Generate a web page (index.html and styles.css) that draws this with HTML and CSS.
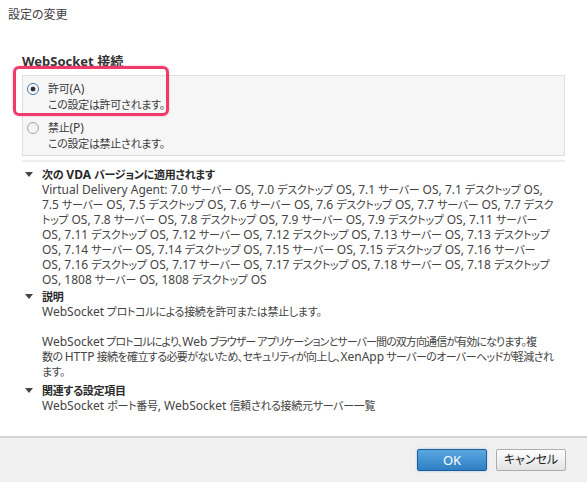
FILE: index.html
```html
<!DOCTYPE html>
<html lang="ja">
<head>
<meta charset="utf-8">
<title>設定の変更</title>
<link rel="stylesheet" href="styles.css">
</head>
<body>
<div class="dialog">
  <main class="main">
    <div class="title">設定の変更</div>
    <div class="content">
      <div class="group-title">WebSocket 接続</div>
      <div class="options-wrap">
        <div class="options">
          <div class="option">
            <span class="radio checked"></span>
            <div class="option-text">
              <div class="option-label"><span class="j">許可</span>(A)</div>
              <div class="option-desc jp">この設定は許可されます。</div>
            </div>
          </div>
          <div class="option">
            <span class="radio"></span>
            <div class="option-text">
              <div class="option-label"><span class="j">禁止</span>(P)</div>
              <div class="option-desc jp">この設定は禁止されます。</div>
            </div>
          </div>
        </div>
        <div class="highlight"></div>
      </div>
      <div class="divider"></div>

      <section class="section first">
        <span class="caret"></span>
        <div class="section-body">
          <div class="section-title"><span class="j">次の</span> VDA <span class="j">バージョンに適用されます</span></div>
          <p class="text">Virtual Delivery Agent: 7.0 <span class="j">サーバー</span> OS, 7.0 <span class="j">デスクトップ</span> OS, 7.1 <span class="j">サーバー</span> OS, 7.1 <span class="j">デスクトップ</span> OS,<br>7.5 <span class="j">サーバー</span> OS, 7.5 <span class="j">デスクトップ</span> OS, 7.6 <span class="j">サーバー</span> OS, 7.6 <span class="j">デスクトップ</span> OS, 7.7 <span class="j">サーバー</span> OS, 7.7 <span class="j">デスク</span><br><span class="j">トップ</span> OS, 7.8 <span class="j">サーバー</span> OS, 7.8 <span class="j">デスクトップ</span> OS, 7.9 <span class="j">サーバー</span> OS, 7.9 <span class="j">デスクトップ</span> OS, 7.11 <span class="j">サーバー</span><br>OS, 7.11 <span class="j">デスクトップ</span> OS, 7.12 <span class="j">サーバー</span> OS, 7.12 <span class="j">デスクトップ</span> OS, 7.13 <span class="j">サーバー</span> OS, 7.13 <span class="j">デスクトップ</span><br>OS, 7.14 <span class="j">サーバー</span> OS, 7.14 <span class="j">デスクトップ</span> OS, 7.15 <span class="j">サーバー</span> OS, 7.15 <span class="j">デスクトップ</span> OS, 7.16 <span class="j">サーバー</span><br>OS, 7.16 <span class="j">デスクトップ</span> OS, 7.17 <span class="j">サーバー</span> OS, 7.17 <span class="j">デスクトップ</span> OS, 7.18 <span class="j">サーバー</span> OS, 7.18 <span class="j">デスクトップ</span><br>OS, 1808 <span class="j">サーバー</span> OS, 1808 <span class="j">デスクトップ</span> OS</p>
        </div>
      </section>

      <section class="section second">
        <span class="caret"></span>
        <div class="section-body">
          <div class="section-title"><span class="j">説明</span></div>
          <p class="text jp"><span class="l">WebSocket</span> プロトコルによる接続を許可または禁止します。</p>
          <p class="text jp para"><span class="tight"><span class="l">WebSocket</span> プロトコルにより、<span class="l">Web</span> ブラウザー アプリケーションとサーバー間の双方向通信が有効になります。複</span><br>数の <span class="l">HTTP</span> 接続を確立する必要がないため、セキュリティが向上し、<span class="l">XenApp</span> サーバーのオーバーヘッドが軽減され<br>ます。</p>
        </div>
      </section>

      <section class="section third">
        <span class="caret"></span>
        <div class="section-body">
          <div class="section-title"><span class="j">関連する設定項目</span></div>
          <p class="text">WebSocket <span class="j">ポート番号</span>, WebSocket <span class="j">信頼される接続元サーバー一覧</span></p>
        </div>
      </section>
    </div>
  </main>
  <footer class="footer">
    <button class="btn btn-primary" type="button">OK</button>
    <button class="btn btn-default" type="button">キャンセル</button>
  </footer>
</div>
</body>
</html>
```

FILE: styles.css
```css
* { box-sizing: border-box; }

html, body {
  margin: 0;
  padding: 0;
  height: 100%;
  background: #ffffff;
}

body {
  font-family: "Noto Sans", "Noto Sans CJK JP", sans-serif;
  font-feature-settings: "palt";
  font-size: 12px;
  color: #3c3c3c;
  overflow: hidden;
}

/* Japanese runs: Meiryo UI style narrow kana */
.j, .jp {
  font-size: 11px;
  letter-spacing: -0.3px;
}

.jp .l {
  font-size: 12px;
  letter-spacing: 0;
}

.dialog {
  display: flex;
  flex-direction: column;
  height: 100vh;
}

.main {
  flex: 1;
  min-height: 0;
}

.title {
  padding: 7px 0 0 8px;
  line-height: 15px;
  font-size: 12px;
  color: #404040;
}

.content {
  padding: 31px 22px 0 22px;
}

.group-title {
  font-size: 13px;
  font-weight: bold;
  line-height: 16px;
  color: #333333;
}

.options-wrap {
  position: relative;
  margin-top: 6px;
}

.options {
  background: #f6f6f6;
  border: 1px solid #dedede;
  padding: 5px 0 3px 4px;
  display: flex;
  flex-direction: column;
  gap: 7px;
}

.option {
  display: flex;
  align-items: flex-start;
  gap: 9px;
  line-height: 16px;
}

.option-label, .option-desc {
  white-space: nowrap;
  color: #3c3c3c;
}

.radio {
  width: 12px;
  height: 12px;
  margin-top: 2px;
  border-radius: 50%;
  border: 1px solid #a3a3a3;
  background: linear-gradient(#eeeeee, #fafafa);
  flex: none;
  position: relative;
}

.radio.checked {
  border-color: #3b6fb0;
  background: #ffffff;
}

.radio.checked::after {
  content: "";
  position: absolute;
  left: 3px;
  top: 3px;
  width: 4px;
  height: 4px;
  border-radius: 50%;
  background: #333333;
  box-shadow: 0 0 0 0.5px #555;
}

.highlight {
  position: absolute;
  left: -9px;
  top: -9px;
  width: 156px;
  height: 50px;
  border: 3px solid #ef3b6c;
  border-radius: 6px;
  box-shadow: 0 0 2px rgba(240, 64, 111, 0.5);
  pointer-events: none;
}

.divider {
  height: 2px;
  background: #eeeeee;
  margin-top: 4px;
}

.section {
  display: grid;
  grid-template-columns: 20px 1fr;
  line-height: 15px;
}

.section.first { margin-top: 5px; }
.section.second { margin-top: 2px; }
.section.third { margin-top: 4px; }

.caret {
  width: 0;
  height: 0;
  margin: 5px 0 0 3px;
  border-left: 4.5px solid transparent;
  border-right: 4.5px solid transparent;
  border-top: 5px solid #444444;
}

.section-title {
  font-weight: bold;
  color: #2a2a2a;
}

.text {
  margin: 0;
  white-space: nowrap;
  color: #444444;
}

.text.para {
  margin-top: 15px;
  letter-spacing: -0.6px;
}

.text.para .tight {
  letter-spacing: -0.9px;
}

.text.para .tight .l {
  letter-spacing: 0;
}

.footer {
  flex: none;
  height: 46px;
  background: #f0f0f0;
  border-top: 2px solid #d4d4d4;
  display: flex;
  justify-content: flex-end;
  align-items: flex-start;
  gap: 9px;
  padding: 11px 21px 0 0;
}

.btn {
  width: 70px;
  height: 22px;
  font-family: "Noto Sans", "Noto Sans CJK JP", sans-serif;
  font-feature-settings: "palt";
  padding: 0;
  border-radius: 2px;
  line-height: 18px;
}

.btn-primary {
  font-size: 13px;
  color: #ffffff;
  border: 1px solid #1f5e9c;
  background: linear-gradient(#5aa7e0, #2f7fc4);
  box-shadow: 0 0 2px rgba(60, 140, 210, 0.6);
}

.btn-default {
  font-size: 12px;
  color: #222222;
  border: 1px solid #adadad;
  background: linear-gradient(#fdfdfd, #e3e3e3);
}
```
